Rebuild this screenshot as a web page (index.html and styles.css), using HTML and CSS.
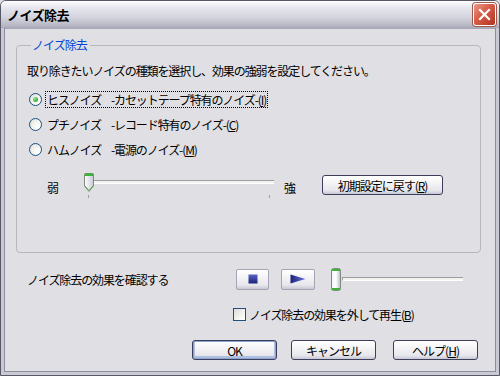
FILE: index.html
```html
<!DOCTYPE html>
<html lang="ja">
<head>
    <meta charset="UTF-8">
    <title>ノイズ除去</title>
    <link rel="stylesheet" href="styles.css">
</head>
<body>
    <div class="window">
        <!-- Title bar -->
        <div class="titlebar">
            <span class="title">ノイズ除去</span>
            <div class="close">
                <svg width="21" height="21" viewBox="0 0 21 21">
                    <path d="M6 6 L15 15 M15 6 L6 15" stroke="#fff" stroke-width="2.2" stroke-linecap="square"/>
                </svg>
            </div>
        </div>

        <div class="client">
            <!-- Noise group -->
            <fieldset class="group">
                <legend>ノイズ除去</legend>
                <p class="intro">取り除きたいノイズの種類を選択し、効果の強弱を設定してください。</p>

                <div class="radios">
                    <div class="radio-row">
                        <span class="radio checked"></span>
                        <span class="radio-label focused"><span class="name">ヒスノイズ</span>-カセットテープ特有のノイズ-(<u>I</u>)</span>
                    </div>
                    <div class="radio-row">
                        <span class="radio"></span>
                        <span class="radio-label"><span class="name">プチノイズ</span>-レコード特有のノイズ-(<u>C</u>)</span>
                    </div>
                    <div class="radio-row">
                        <span class="radio"></span>
                        <span class="radio-label"><span class="name">ハムノイズ</span>-電源のノイズ-(<u>M</u>)</span>
                    </div>
                </div>

                <div class="strength">
                    <span class="weak">弱</span>
                    <div class="slider">
                        <div class="track"></div>
                        <svg class="thumb-down" width="12" height="20" viewBox="0 0 12 20">
                            <defs>
                                <linearGradient id="tg" x1="0" y1="0" x2="1" y2="0">
                                    <stop offset="0" stop-color="#ffffff"/>
                                    <stop offset="1" stop-color="#c8c8d4"/>
                                </linearGradient>
                            </defs>
                            <path d="M1.5 1.5 Q1.5 0.5 2.5 0.5 L9.5 0.5 Q10.5 0.5 10.5 1.5 L10.5 13 L6 18.5 L1.5 13 Z" fill="url(#tg)" stroke="#7e8a7e"/>
                            <path d="M1.5 3 L1.5 1.5 Q1.5 0.5 2.5 0.5 L9.5 0.5 Q10.5 0.5 10.5 1.5 L10.5 3 Z" fill="#3fb03a"/>
                            <path d="M2 13 L6 17.5 L10 13" fill="none" stroke="#56b050" stroke-width="1"/>
                        </svg>
                        <span class="tick tick-left"></span>
                        <span class="tick tick-right"></span>
                    </div>
                    <span class="strong">強</span>
                    <button class="btn reset">初期設定に戻す(<u>R</u>)</button>
                </div>
            </fieldset>

            <!-- Preview -->
            <div class="preview">
                <span class="preview-text">ノイズ除去の効果を確認する</span>
                <button class="btn media">
                    <svg width="10" height="10" viewBox="0 0 10 10">
                        <defs>
                            <linearGradient id="ng" x1="0" y1="0" x2="0" y2="1">
                                <stop offset="0" stop-color="#5a64c8"/>
                                <stop offset="1" stop-color="#1c2278"/>
                            </linearGradient>
                        </defs>
                        <rect x="0.5" y="0.5" width="9" height="9" fill="url(#ng)"/>
                    </svg>
                </button>
                <button class="btn media play">
                    <svg width="16" height="10" viewBox="0 0 16 10">
                        <defs>
                            <linearGradient id="pg" x1="0" y1="0" x2="1" y2="0">
                                <stop offset="0" stop-color="#1c2278"/>
                                <stop offset="1" stop-color="#6a74d8"/>
                            </linearGradient>
                        </defs>
                        <path d="M0.5 0.5 L15.5 5 L0.5 9.5 Z" fill="url(#pg)"/>
                    </svg>
                </button>
                <div class="pos-slider">
                    <svg class="thumb-bar" width="12" height="23" viewBox="0 0 12 23">
                        <defs>
                            <linearGradient id="bg" x1="0" y1="0" x2="1" y2="0">
                                <stop offset="0" stop-color="#f4f4f8"/>
                                <stop offset="0.5" stop-color="#ffffff"/>
                                <stop offset="1" stop-color="#b8b8c8"/>
                            </linearGradient>
                        </defs>
                        <rect x="1.5" y="0.5" width="9" height="22" rx="2" fill="url(#bg)" stroke="#7e8a7e"/>
                        <rect x="2" y="1" width="8" height="2" fill="#3fb03a"/>
                        <rect x="2" y="20" width="8" height="2" fill="#3fb03a"/>
                    </svg>
                    <div class="track pos-track"></div>
                </div>
            </div>

            <!-- Bypass -->
            <div class="bypass">
                <span class="checkbox"></span>
                <span>ノイズ除去の効果を外して再生(<u>B</u>)</span>
            </div>

            <!-- Dialog buttons -->
            <div class="actions">
                <button class="btn action default">OK</button>
                <button class="btn action">キャンセル</button>
                <button class="btn action">ヘルプ(<u>H</u>)</button>
            </div>
        </div>
    </div>
</body>
</html>
```

FILE: styles.css
```css
/* Global */
body {
    margin: 0;
    padding: 0;
    font-family: "Noto Sans CJK JP", sans-serif;
    font-size: 12px;
    color: #000;
    background: #e0dfe3;
}

.window {
    width: 500px;
    height: 376px;
    box-sizing: border-box;
    border: 1px solid #585867;
    border-radius: 6px 6px 0 0;
    background: #e0dfe3;
    display: flex;
    flex-direction: column;
    overflow: hidden;
}

/* Title bar */
.titlebar {
    height: 27px;
    flex-shrink: 0;
    display: flex;
    align-items: center;
    justify-content: space-between;
    padding: 0 2px 0 6px;
    background: linear-gradient(to bottom, #ffffff 0%, #e6e6ee 25%, #d4d4de 60%, #b9b9c6 90%, #a8a8b8 100%);
}

.title {
    font-weight: bold;
    font-size: 13px;
    letter-spacing: -0.5px;
}

.close {
    width: 21px;
    height: 21px;
    border: 1px solid #fff;
    border-radius: 3px;
    background: linear-gradient(135deg, #e99a8a 0%, #d65a45 45%, #b03520 100%);
    box-shadow: 0 0 0 1px #9a5a50;
    margin-right: 1px;
    display: flex;
}

/* Client area */
.client {
    flex: 1;
    border-left: 3px solid #c9c9d4;
    border-right: 3px solid #c9c9d4;
    border-bottom: 3px solid #c9c9d4;
    box-shadow: inset 1px 0 0 #8c8c9c, inset -1px 0 0 #8c8c9c, inset 0 -1px 0 #8c8c9c, inset 0 1px 0 #a8a8b8;
    padding: 10px 0 0 12px;
    display: flex;
    flex-direction: column;
}

/* Group box */
.group {
    width: 465px;
    height: 215px;
    box-sizing: border-box;
    margin: 0;
    padding: 0 0 0 10px;
    border: 1px solid #b6b6bf;
    border-radius: 4px;
}

.group legend {
    color: #0046d5;
    padding: 0 3px 0 1px;
    margin-left: 4px;
    line-height: 14px;
    letter-spacing: -1px;
}

.intro {
    margin: 11px 0 0 0;
    line-height: 16px;
    letter-spacing: -1.1px;
}

.radios {
    margin-top: 12px;
    margin-left: 2px;
    display: flex;
    flex-direction: column;
    gap: 8px;
}

.radio-row {
    display: flex;
    align-items: center;
    height: 17px;
    letter-spacing: -1.1px;
}

.radio {
    width: 11px;
    height: 11px;
    border: 1px solid #1c5180;
    border-radius: 50%;
    background: radial-gradient(circle at 70% 70%, #ffffff 0%, #f2f2ee 50%, #d8d8d0 100%);
    margin-right: 3px;
    position: relative;
    flex-shrink: 0;
}

.radio.checked::after {
    content: "";
    position: absolute;
    left: 3px;
    top: 3px;
    width: 5px;
    height: 5px;
    border-radius: 50%;
    background: radial-gradient(circle at 35% 35%, #9ee89a 0%, #3fb03a 60%, #21a121 100%);
}

.radio-label {
    padding: 0 1px;
    line-height: 15px;
    border: 1px solid transparent;
}

.radio-label.focused {
    border: 1px dotted #000;
}

.name {
    display: inline-block;
    width: 64px;
}

/* Strength slider */
.strength {
    display: flex;
    align-items: center;
    margin-top: 15px;
    margin-left: 20px;
}

.weak, .strong {
    line-height: 16px;
    margin-top: 6px;
}

.slider {
    position: relative;
    width: 190px;
    height: 24px;
    margin-left: 25px;
}

.track {
    height: 2px;
    border-top: 1px solid #9d9da1;
    border-left: 1px solid #9d9da1;
    background: #f3f3ef;
    border-bottom: 1px solid #fff;
}

.slider .track {
    margin-top: 7px;
}

.thumb-down {
    position: absolute;
    left: -1px;
    top: 0;
}

.tick {
    position: absolute;
    top: 22px;
    width: 1px;
    height: 3px;
    background: #a0a0a0;
}

.tick-left { left: 4px; }
.tick-right { left: 185px; }

.strong {
    margin-left: 10px;
}

/* Buttons */
.btn {
    font-family: inherit;
    font-size: 12px;
    letter-spacing: -1px;
    height: 20px;
    padding: 0;
    border: 1px solid #3d3d5c;
    border-radius: 3px;
    background: linear-gradient(to bottom, #ffffff 0%, #f4f4f6 40%, #e6e6ec 80%, #c8c8d6 100%);
    color: #000;
    line-height: 17px;
}

.reset {
    width: 121px;
    margin-left: 26px;
}

/* Preview row */
.preview {
    display: flex;
    align-items: center;
    margin-top: 14px;
    margin-left: 11px;
    height: 24px;
}

.preview-text {
    width: 209px;
    letter-spacing: -1.1px;
}

.media {
    width: 33px;
    height: 21px;
    display: flex;
    align-items: center;
    justify-content: center;
    border-color: #a4a4b4;
    border-radius: 2px;
}

.media.play {
    width: 34px;
    margin-left: 12px;
}

.pos-slider {
    display: flex;
    align-items: center;
    margin-left: 15px;
}

.pos-track {
    width: 120px;
}

/* Bypass checkbox */
.bypass {
    display: flex;
    align-items: center;
    margin-top: 15px;
    margin-left: 217px;
    letter-spacing: -1.1px;
}

.checkbox {
    width: 11px;
    height: 11px;
    border: 1px solid #1c5180;
    background: linear-gradient(135deg, #dcdcd6 0%, #f4f4f0 60%, #ffffff 100%);
    margin-right: 3px;
}

/* Dialog actions */
.actions {
    display: flex;
    margin-top: 17px;
    margin-left: 176px;
    gap: 14px;
}

.action {
    width: 85px;
    height: 20px;
}

.action:last-child {
    margin-left: 3px;
}

.action.default {
    border-color: #3d3d5c;
    box-shadow: inset 0 0 0 1px #8aa4d4, inset 0 -1px 0 2px #b0c0e0;
}
```
